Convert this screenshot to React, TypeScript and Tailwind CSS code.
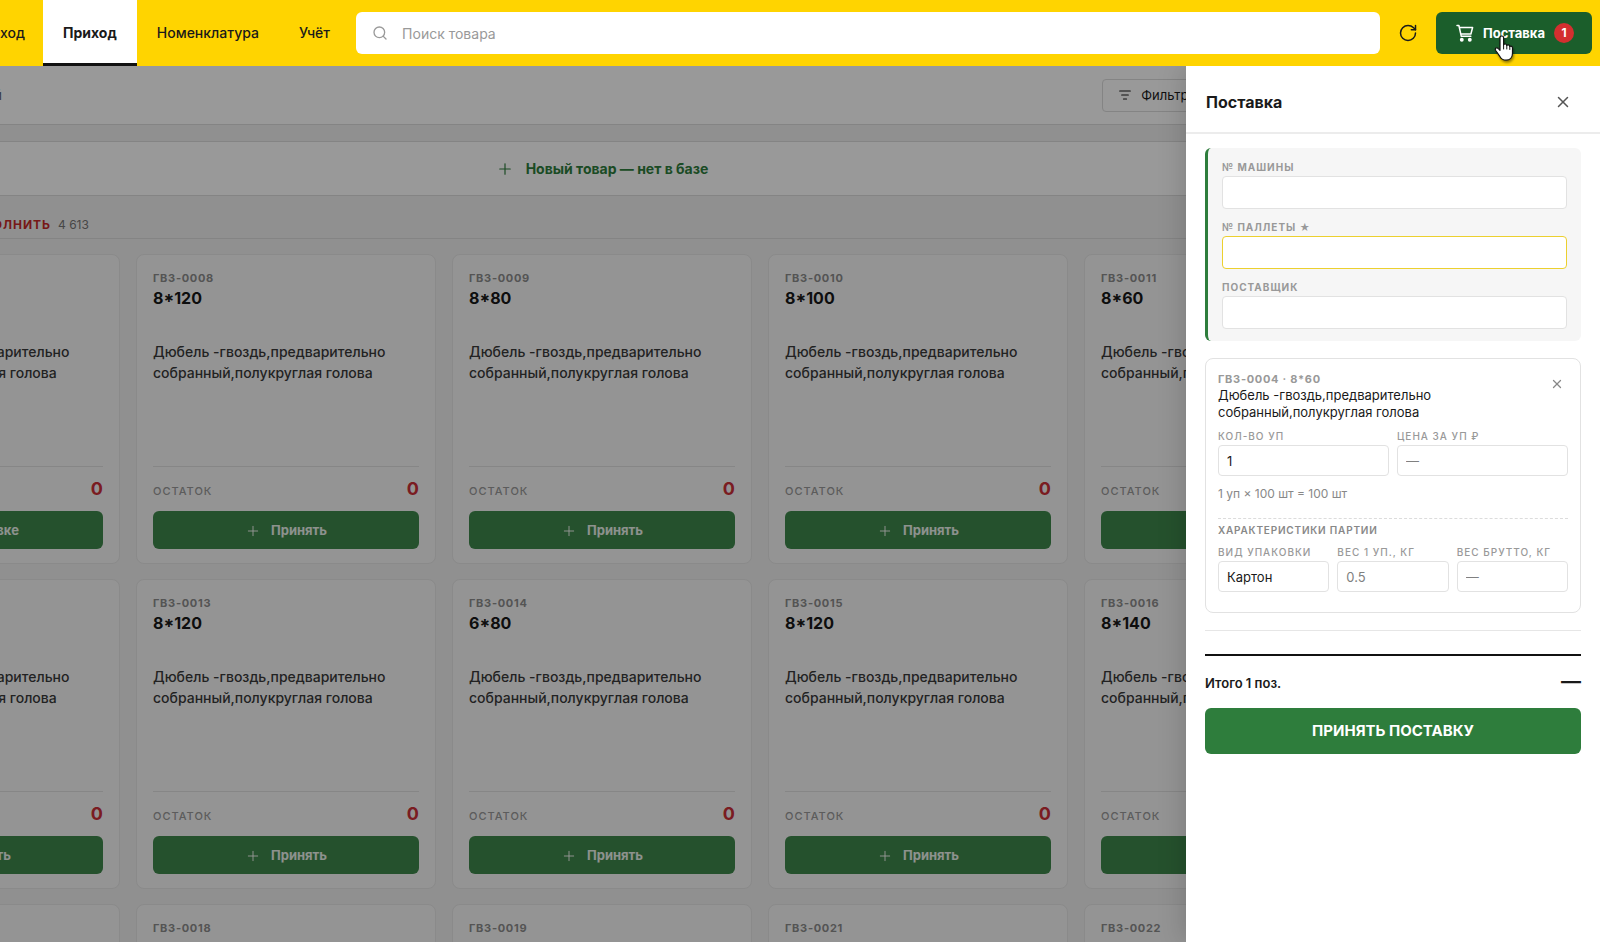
import React, { useState } from 'react';
import { Plus, Search, RotateCw, X } from 'lucide-react';

interface Product {
  code: string;
  size: string;
  inSupply?: boolean;
}

const PRODUCT_NAME = 'Дюбель -гвоздь,предварительно собранный,полукруглая голова';

const products: Product[] = [
  { code: 'ГВЗ-0004', size: '8*60', inSupply: true },
  { code: 'ГВЗ-0008', size: '8*120' },
  { code: 'ГВЗ-0009', size: '8*80' },
  { code: 'ГВЗ-0010', size: '8*100' },
  { code: 'ГВЗ-0011', size: '8*60' },
  { code: 'ГВЗ-0012', size: '8*100' },
  { code: 'ГВЗ-0013', size: '8*120' },
  { code: 'ГВЗ-0014', size: '6*80' },
  { code: 'ГВЗ-0015', size: '8*120' },
  { code: 'ГВЗ-0016', size: '8*140' },
  { code: 'ГВЗ-0017', size: '8*80' },
  { code: 'ГВЗ-0018', size: '8*100' },
  { code: 'ГВЗ-0019', size: '8*120' },
  { code: 'ГВЗ-0021', size: '6*60' },
  { code: 'ГВЗ-0022', size: '6*80' },
];

const CartIcon = () => (
  <svg width="18" height="18" viewBox="0 0 18 18" fill="none" stroke="currentColor" strokeWidth="1.5" strokeLinecap="round" strokeLinejoin="round">
    <path d="M1 1.500h1.900L5.300 12.300h9.500M3.400 3.500h13.200l-1.700 6.500H4.900" />
    <circle cx="5.800" cy="15.800" r="1.200" fill="currentColor" />
    <circle cx="13.800" cy="15.800" r="1.200" fill="currentColor" />
  </svg>
);

const FilterIcon = () => (
  <svg width="12" height="12" viewBox="0 0 12 12" fill="none" stroke="currentColor" strokeWidth="1.2" strokeLinecap="round">
    <path d="M.7 2h10.600M2.700 6h6.600M4.500 10h3" />
  </svg>
);

const HandCursor = () => (
  <svg width="22" height="28" viewBox="0 0 22 28" className="drop-shadow-[1px_2px_1px_rgba(0,0,0,0.4)]">
    <path
      d="M7 2.8C7 1.7 7.8 1 8.8 1s1.8.7 1.8 1.8v7c.3-.5.8-.8 1.5-.8.9 0 1.6.6 1.7 1.4.3-.3.7-.5 1.3-.5.9 0 1.6.6 1.7 1.5.3-.2.6-.3 1-.3 1 0 1.7.8 1.7 1.8v5.3c0 4-2.4 7-6.4 7-3 0-4.700-1.200-6.100-3.500L2.700 15.500c-.6-1-.4-1.900.3-2.400.8-.5 1.700-.3 2.400.5L7 15.300z"
      fill="#fff"
      stroke="#111"
      strokeWidth="1.2"
      strokeLinejoin="round"
    />
    <path d="M10.600 10v4M13.800 10.500v3.500M16.800 11.500v3" stroke="#111" strokeWidth="1" strokeLinecap="round" />
  </svg>
);

const ProductCard: React.FC<{ product: Product }> = ({ product }) => (
  <article className="flex h-[310px] min-w-0 flex-col rounded-lg border border-[#e6e6e6] bg-[#f7f7f7] px-4 pt-[15px] pb-[14px]">
    <div className="text-[11px] leading-4 font-bold tracking-[0.7px] text-[#8c8c8c]">{product.code}</div>
    <div className="text-base leading-6 font-bold text-[#181818]">{product.size}</div>
    <p className="mt-[31px] text-sm leading-[21px] font-medium text-[#3a3a3a]">{PRODUCT_NAME}</p>
    <div className="mt-auto flex items-center justify-between border-t border-[#e0e0e0] pt-2">
      <span className="mt-1 text-[11px] leading-6 font-medium tracking-[1px] text-[#999]">ОСТАТОК</span>
      <span className="text-lg leading-6 font-bold text-[#cc3038]">0</span>
    </div>
    <button className="mt-2 flex h-[38px] shrink-0 items-center justify-center gap-[10px] rounded-md bg-[#3f874b] pt-px text-[13px] font-bold text-white/90">
      <Plus size={16} strokeWidth={1.5} />
      {product.inSupply ? 'В поставке' : 'Принять'}
    </button>
  </article>
);

const SupplyField: React.FC<{ id: string; label: string; active?: boolean }> = ({ id, label, active }) => (
  <div className="flex flex-col gap-[2px]">
    <label htmlFor={id} className="text-[10px] leading-[13px] font-bold tracking-[1px] text-[#999]">
      {label}
    </label>
    <input
      id={id}
      className={
        active
          ? 'h-[33px] w-full rounded border border-[#ecd02f] bg-white px-2 text-[13px] outline-none'
          : 'h-[33px] w-full rounded border border-[#e2e2e2] bg-white px-2 text-[13px] outline-none'
      }
    />
  </div>
);

const ItemField: React.FC<{ id: string; label: string; value?: string; placeholder?: string }> = ({ id, label, value, placeholder }) => (
  <div className="flex min-w-0 flex-1 flex-col gap-[2px]">
    <label htmlFor={id} className="text-[10px] leading-[13px] font-medium tracking-[1px] whitespace-nowrap text-[#999]">
      {label}
    </label>
    <input
      id={id}
      defaultValue={value}
      placeholder={placeholder}
      className="h-[31px] w-full rounded border border-[#e2e2e2] bg-white px-2 text-[13px] text-[#1a1a1a] outline-none placeholder:text-[#808080]"
    />
  </div>
);

export default function App() {
  const [query, setQuery] = useState('');

  return (
    <div className="flex h-screen flex-col overflow-hidden bg-[#f0f0f0] font-['Inter',sans-serif] text-[#1a1a1a]">
      {/* Top bar */}
      <header className="relative z-20 flex h-[66px] shrink-0 items-center bg-[#ffd400] pr-2">
        <nav className="flex h-full items-stretch text-sm font-medium">
          <div className="flex w-[43px] justify-end overflow-hidden">
            <a href="#rashod" className="flex shrink-0 items-center px-[18px] pb-px">Расход</a>
          </div>
          <a href="#prihod" className="flex items-center border-b-[3px] border-[#111] bg-white px-5 pt-[2px] font-bold">Приход</a>
          <a href="#nomenklatura" className="flex items-center px-5 pb-px">Номенклатура</a>
          <a href="#uchet" className="flex items-center px-5 pb-px">Учёт</a>
        </nav>
        <label className="ml-[6px] flex h-[42px] min-w-0 flex-1 items-center gap-[14px] rounded-md bg-white px-4 text-[#999]">
          <Search size={16} strokeWidth={2} />
          <input
            aria-label="Поиск товара"
            value={query}
            onChange={e => setQuery(e.target.value)}
            placeholder="Поиск товара"
            className="min-w-0 flex-1 pt-[2px] text-sm text-[#1a1a1a] outline-none placeholder:text-[#999]"
          />
        </label>
        <button aria-label="Обновить" className="flex h-[42px] w-14 items-center justify-center">
          <RotateCw size={20} strokeWidth={1.8} />
        </button>
        <button className="relative flex h-[42px] items-center gap-[9px] rounded-md bg-[#1b5e2b] pr-[18px] pl-5 text-[13px] font-bold text-white">
          <CartIcon />
          <span className="pt-px">Поставка</span>
          <span className="flex size-5 items-center justify-center rounded-full bg-[#d32f2f] text-xs">1</span>
          <span className="pointer-events-none absolute top-[23px] left-[57px]">
            <HandCursor />
          </span>
        </button>
      </header>

      <div className="relative min-h-0 flex-1 overflow-hidden">
        {/* Catalogue, scrolled sideways under the dimmer */}
        <main className="mr-[200px] -ml-[196px]">
          <div className="-mr-[200px] flex h-[59px] items-center justify-between border-b border-[#dcdcdc] bg-white pr-[385px]">
            <span className="w-[198px] pt-[2px] text-right text-[13px] text-[#5c6370]">Последний</span>
            <button className="flex h-[33px] items-center gap-[10px] rounded border border-[#dcdcdc] px-4 text-[13px]">
              <FilterIcon />
              <span className="pt-px">Фильтры</span>
            </button>
          </div>
          <div className="px-4 pt-4">
            <button className="flex h-[55px] w-full items-center justify-center gap-3 rounded-lg border border-[#dcdcdc] bg-white text-sm font-bold text-[#2e7d3c]">
              <Plus size={18} strokeWidth={1.6} />
              Новый товар — нет в базе
            </button>
            <div className="mt-4 flex h-[27px] items-center gap-[7px] border-b border-[#dcdcdc]">
              <h2 className="w-[231px] text-right text-xs font-bold tracking-[1px] text-[#c62828]">НУЖНО ЗАПОЛНИТЬ</h2>
              <span className="text-xs text-[#777]">4 613</span>
            </div>
            <div className="mt-[15px] grid grid-cols-5 gap-x-4 gap-y-[15px]">
              {products.map(p => (
                <ProductCard key={p.code} product={p} />
              ))}
            </div>
          </div>
        </main>

        <div className="absolute inset-0 bg-black/40" />

        {/* Supply drawer */}
        <aside className="absolute inset-y-0 right-0 w-[414px] bg-white shadow-[-4px_0_24px_rgba(0,0,0,0.15)]">
          <div className="flex h-[68px] items-center justify-between border-b-2 border-[#ececec] pt-[5px] pr-[28px] pl-5">
            <h2 className="text-base font-bold">Поставка</h2>
            <button aria-label="Закрыть" className="text-[#555]">
              <X size={18} strokeWidth={2} />
            </button>
          </div>

          <div className="px-[19px] pt-[14px]">
            <div className="flex flex-col gap-3 rounded-md border-l-[3px] border-[#2e7d3c] bg-[#f6f6f6] px-[14px] pt-[13px] pb-3">
              <SupplyField id="truck" label="№ МАШИНЫ" />
              <SupplyField id="pallet" label="№ ПАЛЛЕТЫ ★" active />
              <SupplyField id="supplier" label="ПОСТАВЩИК" />
            </div>

            <section className="mt-[17px] rounded-lg border border-[#e2e2e2] px-3 pt-3 pb-5">
              <div className="flex items-start justify-between">
                <div>
                  <div className="text-[11px] leading-4 font-bold tracking-[0.7px] text-[#999]">ГВЗ-0004 · 8*60</div>
                  <p className="max-w-[260px] text-[13px] leading-[17px]">{PRODUCT_NAME}</p>
                </div>
                <button aria-label="Удалить" className="mt-[6px] mr-1 text-[#888]">
                  <X size={14} strokeWidth={2.2} />
                </button>
              </div>
              <div className="mt-[9px] flex gap-2">
                <ItemField id="qty" label="КОЛ-ВО УП" value="1" />
                <ItemField id="price" label="ЦЕНА ЗА УП ₽" placeholder="—" />
              </div>
              <p className="mt-[10px] text-xs leading-4 text-[#888]">1 уп × 100 шт = 100 шт</p>
              <div className="mt-4 border-t border-dashed border-[#dcdcdc] pt-1">
                <h3 className="text-[10px] leading-[15px] font-semibold tracking-[0.8px] text-[#888]">ХАРАКТЕРИСТИКИ ПАРТИИ</h3>
                <div className="mt-2 flex gap-2">
                  <ItemField id="pack" label="ВИД УПАКОВКИ" value="Картон" />
                  <ItemField id="net" label="ВЕС 1 УП., КГ" placeholder="0.5" />
                  <ItemField id="gross" label="ВЕС БРУТТО, КГ" placeholder="—" />
                </div>
              </div>
            </section>

            <div className="mt-[17px] border-t border-[#e6e6e6] pt-[23px]">
              <div className="flex items-center justify-between border-t-2 border-[#111] pt-3">
                <span className="mt-1 text-[13px] font-semibold">Итого 1 поз.</span>
                <span className="text-xl leading-[27px] font-bold">—</span>
              </div>
              <button className="mt-[13px] h-[46px] w-full rounded-md bg-[#2e7d3c] pt-px text-[15px] font-bold text-white">ПРИНЯТЬ ПОСТАВКУ</button>
            </div>
          </div>
        </aside>
      </div>
    </div>
  );
}
